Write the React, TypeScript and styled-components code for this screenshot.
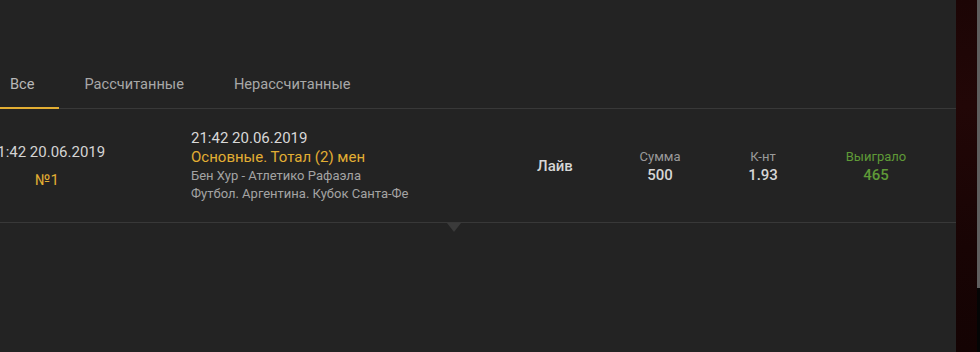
import React from "react";
import styled, { createGlobalStyle } from "styled-components";

const Global = createGlobalStyle`
  html, body { margin: 0; padding: 0; background: #232323; }
  body { font-family: Roboto, "Liberation Sans", Arial, sans-serif; }
  #root { height: 352px; overflow: hidden; }
`;

const Page = styled.div`
  display: flex;
  width: 980px;
  height: 352px;
  overflow: hidden;
`;

const Panel = styled.div`
  flex: 0 0 956px;
  background: #232323;
  overflow: hidden;
  padding-top: 58px;
  box-sizing: border-box;
`;

const Inner = styled.div`
  margin-left: -15px;
`;

const Side = styled.div`
  flex: 1;
  display: flex;
  background: linear-gradient(180deg, #1c0505 0%, #220707 30%, #180404 70%, #140303 100%);
`;

const SideFill = styled.div`
  flex: 1;
`;

const Track = styled.div`
  width: 3px;
  display: flex;
  flex-direction: column;
  background: #050505;
`;

const Thumb = styled.div`
  height: 288px;
  background: #5e5e5e;
`;

const Tabs = styled.div`
  display: flex;
  height: 50px;
  border-bottom: 1px solid #383838;
`;

const Tab = styled.div<{ $active?: boolean }>`
  padding: 0 25px 0 25px;
  display: flex;
  align-items: center;
  font-size: 14.6px;
  color: ${(p) => (p.$active ? "#b8b8b8" : "#a8a8a8")};
  box-shadow: ${(p) => (p.$active ? "inset 0 -2px 0 #e2ae33" : "none")};
  margin-bottom: -1px;
`;

const Row = styled.div`
  position: relative;
  display: grid;
  grid-template-columns: 124px 82px 309px 110px 100px 106px 120px;
  align-items: center;
  height: 113px;
  border-bottom: 1px solid #383838;
`;

const Arrow = styled.div`
  position: absolute;
  left: 462px;
  bottom: -10px;
  width: 0;
  height: 0;
  border-left: 7px solid transparent;
  border-right: 7px solid transparent;
  border-top: 9px solid #3a3a3a;
`;

const DateCol = styled.div`
  display: flex;
  flex-direction: column;
  align-items: center;
  gap: 9px;
  white-space: nowrap;
  padding-top: 2px;
`;

const BigDate = styled.div`
  font-size: 15px;
  line-height: 19px;
  color: #d4d4d4;
`;

const Num = styled.div`
  font-size: 15px;
  line-height: 19px;
  color: #e2ae33;
`;

const Info = styled.div`
  grid-column: 3;
  display: flex;
  flex-direction: column;
  white-space: nowrap;
`;

const InfoLine = styled.div<{ $tone: "main" | "gold" | "muted" }>`
  font-size: ${(p) => (p.$tone === "muted" ? "13px" : "15px")};
  line-height: ${(p) => (p.$tone === "muted" ? "18px" : "19px")};
  color: ${(p) =>
    p.$tone === "gold" ? "#e2ae33" : p.$tone === "main" ? "#d8d8d8" : "#a3a3a3"};
`;

const Live = styled.div`
  text-align: center;
  font-size: 15px;
  font-weight: 500;
  color: #d6d6d6;
  padding-top: 1px;
`;

const Stat = styled.div<{ $win?: boolean }>`
  display: flex;
  flex-direction: column;
  align-items: center;
  padding-top: 1px;
  color: ${(p) => (p.$win ? "#5f9a37" : "#d6d6d6")};
`;

const StatLabel = styled.div<{ $win?: boolean }>`
  font-size: 13px;
  line-height: 19px;
  color: ${(p) => (p.$win ? "#5f9a37" : "#9a9a9a")};
`;

const StatValue = styled.div`
  font-size: 15px;
  line-height: 19px;
  font-weight: 500;
`;

export default function App() {
  return (
    <>
      <Global />
      <Page>
        <Panel>
          <Inner>
            <Tabs>
              <Tab $active>Все</Tab>
              <Tab>Рассчитанные</Tab>
              <Tab>Нерассчитанные</Tab>
            </Tabs>
            <Row>
              <DateCol>
                <BigDate>21:42 20.06.2019</BigDate>
                <Num>№1</Num>
              </DateCol>
              <Info>
                <InfoLine $tone="main">21:42 20.06.2019</InfoLine>
                <InfoLine $tone="gold">Основные. Тотал (2) мен</InfoLine>
                <InfoLine $tone="muted">Бен Хур - Атлетико Рафаэла</InfoLine>
                <InfoLine $tone="muted">Футбол. Аргентина. Кубок Санта-Фе</InfoLine>
              </Info>
              <Live>Лайв</Live>
              <Stat>
                <StatLabel>Сумма</StatLabel>
                <StatValue>500</StatValue>
              </Stat>
              <Stat>
                <StatLabel>К-нт</StatLabel>
                <StatValue>1.93</StatValue>
              </Stat>
              <Stat $win>
                <StatLabel $win>Выиграло</StatLabel>
                <StatValue>465</StatValue>
              </Stat>
              <Arrow />
            </Row>
          </Inner>
        </Panel>
        <Side>
          <SideFill />
          <Track>
            <Thumb />
          </Track>
        </Side>
      </Page>
    </>
  );
}
